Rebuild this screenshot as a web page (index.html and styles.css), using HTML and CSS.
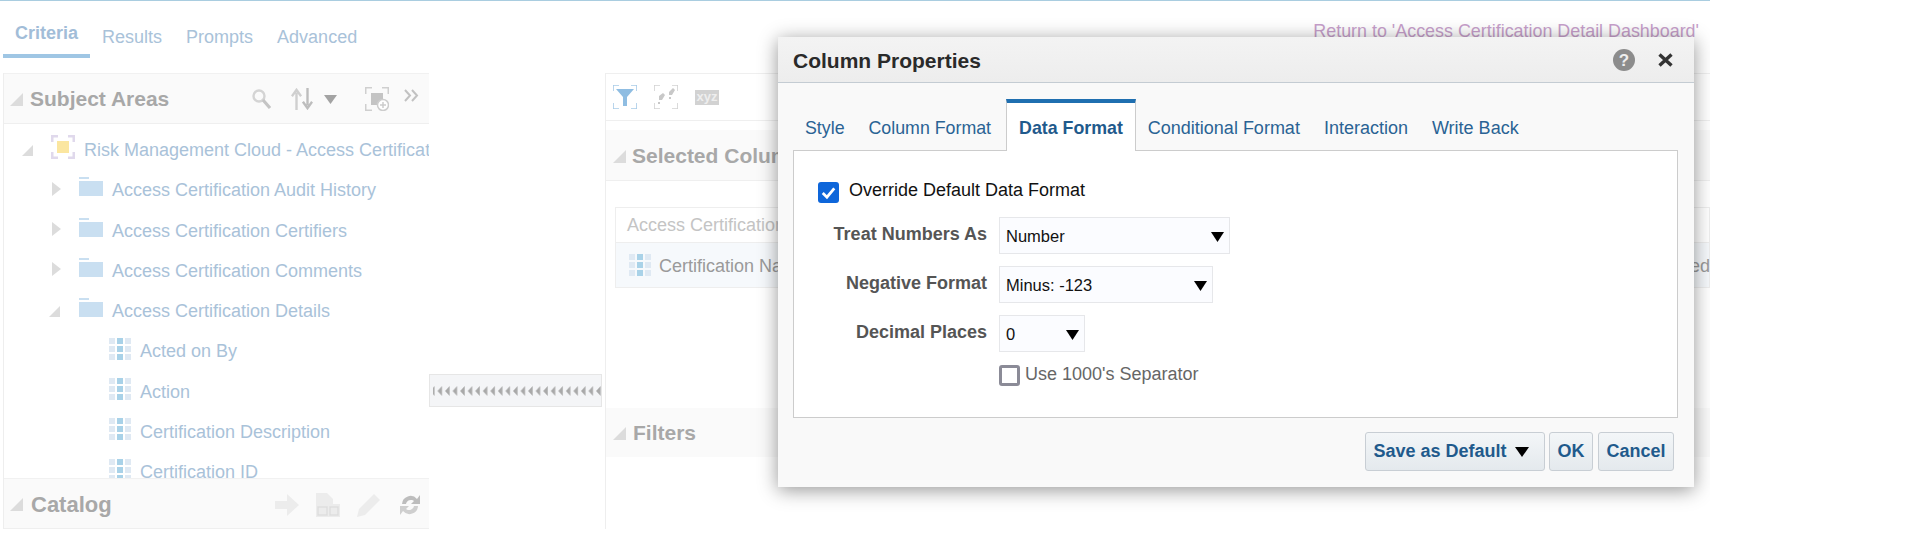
FILE: index.html
```html
<!DOCTYPE html>
<html lang="en">
<head>
<meta charset="utf-8">
<title>Column Properties</title>
<link rel="stylesheet" href="styles.css">
</head>
<body>
<div class="app">
  <nav class="page-tabs">
    <a class="page-tab active">Criteria</a>
    <a class="page-tab">Results</a>
    <a class="page-tab">Prompts</a>
    <a class="page-tab">Advanced</a>
  </nav>
  <a class="return-link">Return to 'Access Certification Detail Dashboard'</a>

  <div class="workspace">
    <aside class="left-pane">
      <header class="pane-head">
        <svg class="tri" viewBox="0 0 13 13"><path d="M13 0V13H0Z"/></svg>
        <span class="pane-title">Subject Areas</span>
        <div class="pane-tools">
          <svg class="t-search" viewBox="0 0 20 22"><circle cx="8" cy="8" r="5.5" fill="none" stroke="#d4d4d4" stroke-width="2.4"/><path d="M12 12l7 8" stroke="#c4c4c4" stroke-width="3.2"/></svg>
          <svg class="t-sort" viewBox="0 0 24 24"><path d="M6 24V5M1 9l5-7 5 7" fill="none" stroke="#cfcfcf" stroke-width="2.6"/><path d="M18 0v19M13 15l5 7 5-7" fill="none" stroke="#bdbdbd" stroke-width="2.6"/></svg>
          <svg class="t-drop" viewBox="0 0 13 9"><path d="M0 0H13L6.500 9Z"/></svg>
          <svg class="t-add" viewBox="0 0 24 24"><path d="M0 7V0H7M17 0h7V7M0 17v7H7" fill="none" stroke="#cfcfcf" stroke-width="3"/><rect x="6" y="6" width="12" height="12" fill="#c4c4c4"/><circle cx="18" cy="18" r="5.500" fill="#fff" stroke="#cdcdcd" stroke-width="1.500"/><path d="M18 15v6M15 18h6" stroke="#cdcdcd" stroke-width="1.500"/></svg>
          <svg class="t-more" viewBox="0 0 15 13"><path d="M1 1l5 5.500-5 5.500M8 1l5 5.500-5 5.500" fill="none" stroke="#c2c2c2" stroke-width="2"/></svg>
        </div>
      </header>

      <div class="tree">
        <div class="row root">
          <svg class="tri tree-tri" viewBox="0 0 13 13"><path d="M13 0V13H0Z"/></svg>
          <svg class="root-icon" viewBox="0 0 24 24"><path d="M0 7V0H7M17 0h7V7M0 17v7H7M17 24h7V17" fill="none" stroke="#e0d9ec" stroke-width="5"/><rect x="6" y="6" width="12" height="12" fill="#fbe6a0"/></svg>
          <span class="row-text">Risk Management Cloud - Access Certification</span>
        </div>
        <div class="row folder">
          <svg class="caret" viewBox="0 0 9 14"><path d="M0 0L9 7L0 14Z"/></svg>
          <svg class="folder-icon" viewBox="0 0 24 19"><path d="M0 0H10V2H0ZM0 4H24V19H0Z"/></svg>
          <span class="row-text">Access Certification Audit History</span>
        </div>
        <div class="row folder">
          <svg class="caret" viewBox="0 0 9 14"><path d="M0 0L9 7L0 14Z"/></svg>
          <svg class="folder-icon" viewBox="0 0 24 19"><path d="M0 0H10V2H0ZM0 4H24V19H0Z"/></svg>
          <span class="row-text">Access Certification Certifiers</span>
        </div>
        <div class="row folder">
          <svg class="caret" viewBox="0 0 9 14"><path d="M0 0L9 7L0 14Z"/></svg>
          <svg class="folder-icon" viewBox="0 0 24 19"><path d="M0 0H10V2H0ZM0 4H24V19H0Z"/></svg>
          <span class="row-text">Access Certification Comments</span>
        </div>
        <div class="row folder">
          <svg class="tri folder-tri" viewBox="0 0 13 13"><path d="M13 0V13H0Z"/></svg>
          <svg class="folder-icon" viewBox="0 0 24 19"><path d="M0 0H10V2H0ZM0 4H24V19H0Z"/></svg>
          <span class="row-text">Access Certification Details</span>
        </div>
        <div class="row leaf">
          <svg class="col-icon" viewBox="0 0 22 22"><use href="#col"/></svg>
          <span class="row-text">Acted on By</span>
        </div>
        <div class="row leaf">
          <svg class="col-icon" viewBox="0 0 22 22"><use href="#col"/></svg>
          <span class="row-text">Action</span>
        </div>
        <div class="row leaf">
          <svg class="col-icon" viewBox="0 0 22 22"><use href="#col"/></svg>
          <span class="row-text">Certification Description</span>
        </div>
        <div class="row leaf">
          <svg class="col-icon" viewBox="0 0 22 22"><use href="#col"/></svg>
          <span class="row-text">Certification ID</span>
        </div>
      </div>

      <footer class="pane-head catalog">
        <svg class="tri" viewBox="0 0 13 13"><path d="M13 0V13H0Z"/></svg>
        <span class="pane-title">Catalog</span>
        <div class="catalog-tools">
          <svg viewBox="0 0 24 22"><path d="M0 7H12V0L24 11 12 22V15H0Z" fill="#ececec"/></svg>
          <svg viewBox="0 0 24 24"><path d="M0 0H11L17 6V11H24V24H0Z" fill="#ececec"/><path d="M2 14h9v8H2zM14 14h8v8h-8z" fill="none" stroke="#dedede" stroke-width="1.500"/></svg>
          <svg viewBox="0 0 24 24"><path d="M0 24L2 16 17 1 23 7 8 22Z" fill="#ececec"/></svg>
          <svg viewBox="0 0 24 24"><path d="M4 11A8.500 8.500 0 0 1 19 6L22 2V11H13L16 8A5 5 0 0 0 8 11Z" fill="#bdbdbd"/><path d="M20 13A8.500 8.500 0 0 1 5 18L2 22V13H11L8 16A5 5 0 0 0 16 13Z" fill="#cfcfcf"/></svg>
        </div>
      </footer>
    </aside>

    <div class="splitter" aria-hidden="true">
      <svg viewBox="0 0 173 10" width="173" height="10"><defs><pattern id="arrows" width="7.550" height="10" patternUnits="userSpaceOnUse"><path d="M0 5L4.500 0V10Z" fill="#a9a9a9"/></pattern></defs><rect x="3" width="170" height="10" fill="url(#arrows)"/></svg>
    </div>

    <main class="main-pane">
      <div class="toolbar">
        <svg viewBox="0 0 24 24"><path d="M0 6V0H6M18 0h6V6M0 18v6H6M18 24h6V18" fill="none" stroke="#a8cbe8" stroke-width="1.600"/><path d="M3 4H21L14 12V21H10V12Z" fill="#8fbde2"/></svg>
        <svg viewBox="0 0 24 24"><path d="M0 6V0H6M18 0h6V6M0 18v6H6M18 24h6V18" fill="none" stroke="#d2d2d2" stroke-width="1.600"/><path d="M15 7l4-4 2 2-3 5h-3ZM5 11l4-3 2 2-3 5H5ZM15 12h2v2h-2ZM4 17h2v2H4Z" fill="#c8c8c8"/></svg>
        <span class="xyz">xyz</span>
      </div>

      <section class="selected">
        <header class="section-head">
          <svg class="tri" viewBox="0 0 13 13"><path d="M13 0V13H0Z"/></svg>
          <span class="pane-title">Selected Columns</span>
        </header>
        <div class="col-box">
          <div class="col-box-head">Access Certification</div>
          <div class="col-box-row">
            <svg class="col-icon" viewBox="0 0 22 22"><use href="#col"/></svg>
            <span class="col-name">Certification Name</span>
            <span class="col-end">Certified</span>
          </div>
        </div>
      </section>

      <section class="filters">
        <header class="section-head">
          <svg class="tri" viewBox="0 0 13 13"><path d="M13 0V13H0Z"/></svg>
          <span class="pane-title">Filters</span>
        </header>
      </section>
    </main>
  </div>

  <div class="dialog" role="dialog" aria-label="Column Properties">
    <header class="dlg-title">
      <span class="dlg-title-text">Column Properties</span>
      <svg class="dlg-help" viewBox="0 0 22 22"><circle cx="11" cy="11" r="11" fill="#8c8c8c"/><text x="11" y="16.500" text-anchor="middle" class="help-q">?</text></svg>
      <svg class="dlg-close" viewBox="0 0 15 14"><path d="M1.500 1.500L13.500 12.500M13.500 1.500L1.500 12.500" stroke="#333" stroke-width="3.400"/></svg>
    </header>

    <div class="dlg-tabs">
      <a class="dlg-tab">Style</a>
      <a class="dlg-tab">Column Format</a>
      <a class="dlg-tab active">Data Format</a>
      <a class="dlg-tab">Conditional Format</a>
      <a class="dlg-tab">Interaction</a>
      <a class="dlg-tab">Write Back</a>
    </div>

    <div class="dlg-body">
      <label class="check-row">
        <span class="check on"><svg viewBox="0 0 20 20"><path d="M4.500 10.500L8.500 14.500L15.500 6" fill="none" stroke="#fff" stroke-width="2.600"/></svg></span>
        <span class="check-label">Override Default Data Format</span>
      </label>
      <div class="form-grid">
        <span class="field-label">Treat Numbers As</span>
        <div class="select w-lg"><span>Number</span><svg viewBox="0 0 13 10"><path d="M0 0H13L6.500 10Z"/></svg></div>
        <span class="field-label">Negative Format</span>
        <div class="select w-md"><span>Minus: -123</span><svg viewBox="0 0 13 10"><path d="M0 0H13L6.500 10Z"/></svg></div>
        <span class="field-label">Decimal Places</span>
        <div class="select w-sm"><span>0</span><svg viewBox="0 0 13 10"><path d="M0 0H13L6.500 10Z"/></svg></div>
        <span></span>
        <label class="sep-row">
          <span class="check off"></span>
          <span class="sep-label">Use 1000's Separator</span>
        </label>
      </div>
    </div>

    <footer class="dlg-foot">
      <button class="btn btn-save">Save as Default <svg viewBox="0 0 14 10"><path d="M0 0H14L7 10Z"/></svg></button>
      <button class="btn btn-ok">OK</button>
      <button class="btn btn-cancel">Cancel</button>
    </footer>
  </div>
</div>

<svg class="defs" aria-hidden="true">
  <symbol id="col" viewBox="0 0 22 22">
    <g fill="#dfe9f3">
      <rect x="0" y="0" width="6" height="6"/><rect x="16" y="0" width="6" height="6"/>
      <rect x="0" y="8" width="6" height="6"/><rect x="16" y="8" width="6" height="6"/>
      <rect x="0" y="16" width="6" height="6"/><rect x="16" y="16" width="6" height="6"/>
    </g>
    <g fill="#a9d2e8">
      <rect x="8" y="0" width="6" height="6"/><rect x="8" y="8" width="6" height="6"/><rect x="8" y="16" width="6" height="6"/>
    </g>
  </symbol>
</svg>
</body>
</html>
```

FILE: styles.css
```css
* { box-sizing: border-box; }
html, body { margin: 0; padding: 0; background: #fff; }
body { font-family: "Liberation Sans", Arial, sans-serif; overflow: hidden; }
.defs { display: none; }

.app {
  position: relative;
  width: 1710px;
  height: 536px;
  overflow: hidden;
  border-top: 1px solid #a9cde0;
  background: #fff;
}

/* page tabs */
.page-tabs { display: flex; height: 57px; margin-left: 3px; align-items: stretch; }
.page-tab {
  padding: 26px 12px 0;
  font-size: 18px;
  line-height: 20px;
  color: #a9c2d9;
}
.page-tab.active {
  padding-top: 22px;
  font-weight: 700;
  border-bottom: 4px solid #9fc6e4;
  color: #a2bdd8;
}
.return-link {
  position: absolute;
  top: 19px;
  right: 11px;
  font-size: 17.900px;
  line-height: 22px;
  color: #c79fcb;
}

/* workspace */
.workspace { display: flex; height: 456px; margin-top: 15px; }
.left-pane {
  display: flex;
  flex-direction: column;
  flex: 0 0 426px;
  min-width: 0;
  margin-left: 3px;
  overflow: hidden;
  border-left: 1px solid #eeeeee;
}
.pane-head {
  display: flex;
  flex: 0 0 51px;
  align-items: center;
  padding-top: 1px;
  background: #fafafa;
  border-top: 1px solid #f1f1f1;
  border-bottom: 1px solid #efefef;
}
.tri { width: 13px; height: 13px; flex: none; }
.tri path { fill: #dcdcdc; }
.pane-head .tri { margin: 0 7px 0 6px; }
.pane-title { font-size: 21px; font-weight: 700; color: #a8a8a8; white-space: nowrap; }
.pane-tools { display: flex; align-items: center; margin-left: auto; padding-right: 10px; }
.t-search { width: 20px; height: 22px; margin-right: 20px; }
.t-sort { width: 22px; height: 22px; margin-right: 11px; }
.t-drop { width: 13px; height: 9px; margin-right: 28px; }
.t-drop path { fill: #a3a3a3; }
.t-add { width: 24px; height: 24px; margin-right: 15px; }
.t-more { width: 15px; height: 13px; margin-bottom: 8px; }

/* tree */
.tree { flex: 1; min-height: 0; overflow: hidden; padding-top: 6.500px; }
.row {
  display: flex;
  align-items: center;
  height: 40.250px;
  font-size: 18px;
  color: #a9c2d9;
  white-space: nowrap;
  overflow: hidden;
}
.root { padding-left: 18px; }
.tree-tri { width: 11px; height: 11px; margin-right: 18px; }
.root-icon { width: 24px; height: 24px; margin-right: 9px; flex: none; margin-top: -8px; }
.folder { padding-left: 48px; }
.caret { width: 9px; height: 14px; margin-right: 18px; flex: none; margin-top: -4px; }
.caret path { fill: #dcdcdc; }
.folder-tri { width: 11px; height: 11px; margin: 0 19px 0 -3px; }
.folder-icon { width: 24px; height: 19px; margin-right: 9px; flex: none; margin-top: -8px; }
.folder-icon path { fill: #c9dff1; }
.leaf { padding-left: 105px; }
.col-icon { width: 22px; height: 22px; flex: none; }
.leaf .col-icon { margin-right: 9px; margin-top: -6px; }

.catalog { padding-top: 2px; padding-right: 7px; }
.catalog .pane-title { margin-left: 1px; font-size: 22px; }
.catalog-tools { display: flex; gap: 17px; margin-left: auto; }
.catalog-tools svg { width: 24px; height: 24px; }

/* splitter */
.splitter {
  flex: 0 0 173px;
  align-self: flex-start;
  display: flex;
  align-items: center;
  height: 33px;
  margin-top: 301px;
  background: #f4f5f7;
  border: 1px solid #e6e6e6;
  overflow: hidden;
}
.splitter svg { flex: none; }

/* main pane */
.main-pane {
  flex: 1;
  min-width: 0;
  margin-left: 3px;
  border-left: 1px solid #eeeeee;
}
.toolbar {
  display: flex;
  align-items: center;
  gap: 17px;
  height: 48px;
  padding-left: 7px;
  border-top: 1px solid #efefef;
  border-bottom: 1px solid #efefef;
}
.toolbar svg { width: 24px; height: 24px; }
.xyz {
  width: 24px;
  height: 15px;
  background: #d2d2d2;
  color: #eeeeee;
  font-size: 13px;
  font-weight: 700;
  line-height: 14px;
  text-align: center;
}
.selected { height: 278px; margin-top: 9px; }
.section-head {
  display: flex;
  align-items: center;
  height: 51px;
  padding-top: 2px;
  background: #fafafa;
  border-bottom: 1px solid #efefef;
}
.section-head .tri { margin: 0 6px 0 7px; }
.col-box { margin: 26px 0 0 9px; border: 1px solid #eeeeee; }
.col-box-head {
  height: 35px;
  padding-left: 11px;
  font-size: 18px;
  line-height: 34px;
  color: #c4c4c4;
  border-bottom: 1px solid #eeeeee;
  white-space: nowrap;
}
.col-box-row {
  display: flex;
  align-items: center;
  height: 44px;
  padding-left: 13px;
  background: #f6f9fc;
  font-size: 18px;
  color: #9a9a9a;
}
.col-name { margin-left: 8px; padding-top: 2px; white-space: nowrap; }
.col-end { margin-left: auto; padding-top: 2px; margin-right: -1px; white-space: nowrap; }
.filters .section-head { height: 49px; padding-top: 1px; border-bottom: none; }
.filters .pane-title { margin-left: 1px; }

/* dialog */
.dialog {
  position: absolute;
  left: 778px;
  top: 36px;
  display: flex;
  flex-direction: column;
  width: 916px;
  height: 450px;
  background: #f9f9f9;
  box-shadow: 0 3px 18px rgba(0, 0, 0, 0.42);
}
.dlg-title {
  display: flex;
  align-items: center;
  flex: 0 0 46px;
  padding: 3px 21px 0 15px;
  background: linear-gradient(#f3f3f3, #ededed);
  border-bottom: 1px solid #c4ccd3;
}
.dlg-title-text { font-size: 21px; font-weight: 700; color: #2a2a2a; }
.dlg-help { width: 22px; height: 22px; margin-left: auto; margin-top: -3px; }
.help-q { fill: #eee; font-size: 17px; font-weight: 700; font-family: "Liberation Sans", Arial, sans-serif; }
.dlg-close { width: 15px; height: 14px; margin-left: 23px; margin-top: -3px; }

.dlg-tabs { display: flex; height: 67px; padding: 16px 0 0 15px; flex: none; position: relative; }
.dlg-tab {
  padding: 17px 12px 0;
  font-size: 17.800px;
  line-height: 24px;
  color: #2a6394;
  white-space: nowrap;
}
.dlg-tab.active {
  position: relative;
  z-index: 1;
  height: 52px;
  margin-left: 3px;
  padding-top: 13px;
  font-weight: 700;
  color: #1f5a8c;
  background: #fff;
  border: 1px solid #cccccc;
  border-top: 4px solid #1f6fb0;
  border-bottom: none;
}
.dlg-tab.active ~ .dlg-tab { font-size: 18px; }

.dlg-body {
  flex: 0 0 268px;
  margin: 0 16px 0 15px;
  padding: 30px 0 0 24px;
  background: #fff;
  border: 1px solid #cccccc;
}
.check-row { display: flex; align-items: center; height: 22px; }
.check { display: block; width: 21px; height: 21px; flex: none; }
.check svg { display: block; }
.check.on { background: #0e66da; border-radius: 3px; }
.check.off { border: 3px solid #8b8b97; border-radius: 3px; background: #fff; }
.check-label { margin-left: 10px; margin-top: -3px; font-size: 18px; color: #111; white-space: nowrap; }

.form-grid {
  display: grid;
  grid-template-columns: 169px auto;
  column-gap: 12px;
  row-gap: 12px;
  margin-top: 14px;
  justify-content: start;
  align-items: center;
}
.field-label {
  font-size: 18px;
  font-weight: 700;
  color: #555;
  text-align: right;
  white-space: nowrap;
  margin-top: -2px;
}
.select {
  display: flex;
  align-items: center;
  justify-content: space-between;
  height: 37px;
  padding: 2px 6px 0;
  background: #fbfcff;
  border: 1px solid #e6e7ea;
  font-size: 16.500px;
  color: #111;
}
.select svg { width: 13px; height: 10px; }
.w-lg { width: 231px; padding-right: 5px; }
.w-md { width: 214px; padding-right: 5px; }
.w-sm { width: 86px; padding-right: 5px; }
.sep-row { display: flex; align-items: center; margin-top: 1px; }
.sep-label { margin-left: 5px; margin-top: -3px; font-size: 18px; color: #666; white-space: nowrap; }

.dlg-foot { display: flex; justify-content: flex-end; padding: 14px 20px 0 0; }
.btn {
  height: 39px;
  padding: 0;
  font-family: "Liberation Sans", Arial, sans-serif;
  font-size: 18px;
  font-weight: 700;
  color: #1f5a8c;
  background: linear-gradient(#f3f6f8, #e4e9ed);
  border: 1px solid #c8ced4;
  border-radius: 3px;
}
.btn svg { width: 14px; height: 10px; margin-left: 3px; }
.btn-save { width: 180px; padding-right: 8px; }
.btn-ok { width: 44px; margin-left: 4px; }
.btn-cancel { width: 76px; margin-left: 5px; }
```
